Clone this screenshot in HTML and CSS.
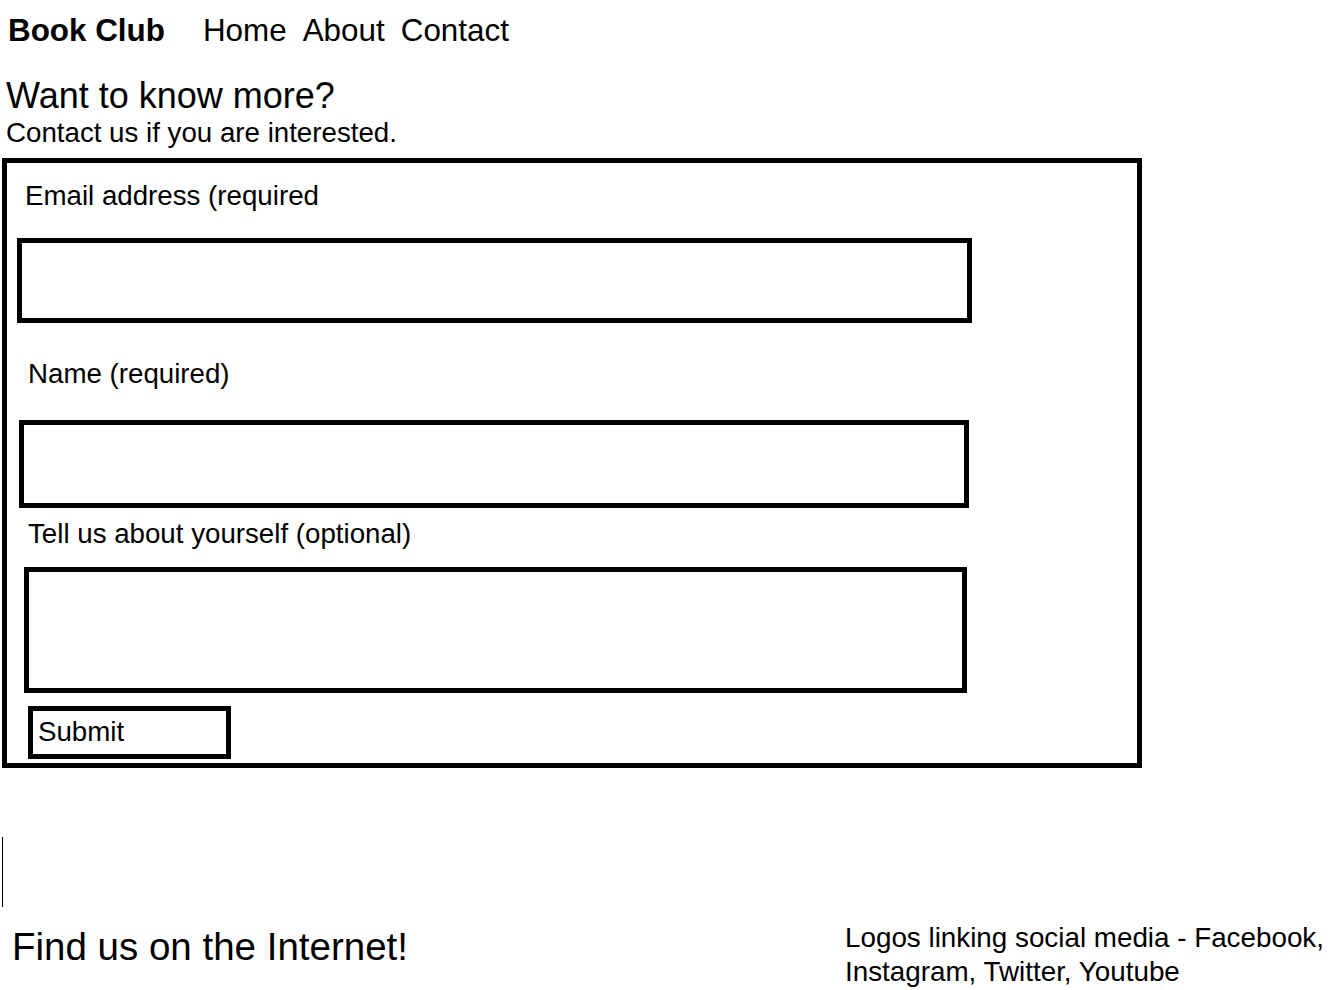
FILE: index.html
```html
<!DOCTYPE html>
<html lang="en">
<head>
    <meta charset="UTF-8">
    <meta name="viewport" content="width=device-width, initial-scale=1.0">
    <title>Book Club - Contact</title>

    <link rel="stylesheet" href="styles.css">
</head>
<body>
    <div class="navBar">
        <span class="brand">Book Club</span>
        <a href="home.html">Home</a>
        <a href="about.html">About</a>
        <a href="contact.html">Contact</a>
    </div>

    <h1 class="title">Want to know more?</h1>
    <p class="subtitle">Contact us if you are interested.</p>

    <form class="contactForm">
        <label class="lbl lbl-email" for="email">Email address (required</label>
        <input class="field field-email" type="email" id="email">

        <label class="lbl lbl-name" for="name">Name (required)</label>
        <input class="field field-name" type="text" id="name">

        <label class="lbl lbl-about" for="about">Tell us about yourself (optional)</label>
        <textarea class="field field-about" id="about"></textarea>

        <button class="submitBtn" type="submit">Submit</button>
    </form>

    <div class="divider"></div>

    <div class="footer">
        <h2 class="findUs">Find us on the Internet!</h2>
        <p class="social">Logos linking social media - Facebook, Instagram, Twitter, Youtube</p>
    </div>
</body>
</html>
```

FILE: styles.css
```css
body{
    margin: 0;
    font-family: "Liberation Sans", Arial, sans-serif;
    color: black;
    background-color: white;
}

.navBar{
    display: flex;
    align-items: baseline;
    padding: 13px 0 0 8px;
    font-size: 31.4px;
    line-height: 36px;
}
.navBar > .brand{
    font-weight: bold;
    margin-right: 38px;
}
.navBar > a{
    color: black;
    text-decoration: none;
    margin-right: 16px;
}

.title{
    margin: 27px 0 0 6px;
    font-size: 36px;
    line-height: 40px;
    font-weight: normal;
}
.subtitle{
    margin: 2px 0 0 6px;
    font-size: 27.7px;
    line-height: 30px;
}

.contactForm{
    display: flex;
    flex-direction: column;
    align-items: flex-start;
    width: 1140px;
    margin: 10px 0 0 2px;
    border: 5px solid black;
    box-sizing: border-box;
}

.lbl{
    font-size: 27.7px;
    line-height: 30px;
}
.lbl-email{ margin: 18px 0 0 18px; }
.lbl-name{ margin: 36px 0 0 21px; }
.lbl-about{ margin: 11px 0 0 21px; }

.field{
    border: 5px solid black;
    box-sizing: border-box;
    border-radius: 0;
    font-family: inherit;
    font-size: 24px;
    resize: none;
    outline: none;
}
.field-email{
    width: 955px;
    height: 85px;
    margin: 27px 0 0 10px;
}
.field-name{
    width: 950px;
    height: 88px;
    margin: 31px 0 0 12px;
}
.field-about{
    width: 943px;
    height: 126px;
    margin: 18px 0 0 17px;
}

.submitBtn{
    width: 203px;
    height: 53px;
    margin: 13px 0 4px 21px;
    padding: 0 0 2px 5px;
    border: 5px solid black;
    box-sizing: border-box;
    background-color: white;
    color: black;
    font-family: inherit;
    font-size: 27.7px;
    line-height: 41px;
    text-align: left;
}

.divider{
    width: 0;
    height: 70px;
    margin: 69px 0 0 2px;
    border-left: 1.5px solid black;
}

.footer{
    display: flex;
    align-items: flex-start;
    margin-top: 14px;
}
.findUs{
    margin: 5px 0 0 12px;
    font-size: 38.5px;
    line-height: 42px;
    font-weight: normal;
}
.social{
    width: 486px;
    margin: 0 0 0 auto;
    font-size: 27.8px;
    line-height: 34px;
}
```
